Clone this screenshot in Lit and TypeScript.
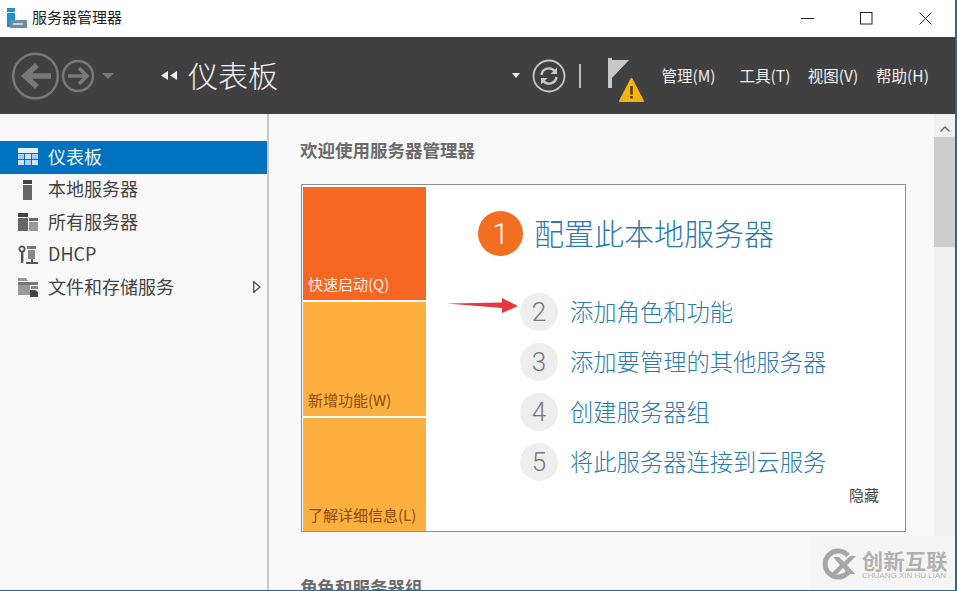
import { LitElement, css, html } from "lit";
import { customElement } from "lit/decorators.js";

const navItems = [
  { label: "仪表板", icon: "grid", active: true },
  { label: "本地服务器", icon: "one" },
  { label: "所有服务器", icon: "all" },
  { label: "DHCP", icon: "dhcp" },
  { label: "文件和存储服务", icon: "files", more: true },
];

const tiles = [
  { label: "快速启动(Q)", cls: "tile first" },
  { label: "新增功能(W)", cls: "tile" },
  { label: "了解详细信息(L)", cls: "tile" },
];

const steps = [
  { n: "2", label: "添加角色和功能" },
  { n: "3", label: "添加要管理的其他服务器" },
  { n: "4", label: "创建服务器组" },
  { n: "5", label: "将此服务器连接到云服务" },
];

const menus = [
  { label: "管理(M)", w: 85 },
  { label: "工具(T)", w: 68 },
  { label: "视图(V)", w: 68 },
  { label: "帮助(H)", w: 71 },
];

@customElement("app-root")
export class AppRoot extends LitElement {
  navIcon(name: string) {
    if (name === "grid") {
      return html`<svg width="20" height="18" viewBox="0 0 20 18">
        <rect x="0" y="0" width="20" height="5" fill="#e6f1fa"></rect>
        <rect x="0" y="6" width="6" height="5" fill="#a9d0ee"></rect>
        <rect x="7" y="6" width="6" height="5" fill="#cfe4f5"></rect>
        <rect x="14" y="6" width="6" height="5" fill="#a9d0ee"></rect>
        <rect x="0" y="12" width="6" height="5" fill="#cfe4f5"></rect>
        <rect x="7" y="12" width="6" height="5" fill="#a9d0ee"></rect>
        <rect x="14" y="12" width="6" height="5" fill="#cfe4f5"></rect>
      </svg>`;
    }
    if (name === "one") {
      return html`<svg width="20" height="20" viewBox="0 0 20 20">
        <rect x="5" y="0" width="9" height="4" fill="#444"></rect>
        <rect x="5" y="5" width="9" height="15" fill="#666"></rect>
      </svg>`;
    }
    if (name === "all") {
      return html`<svg width="20" height="20" viewBox="0 0 20 20">
        <rect x="0" y="1" width="10" height="4" fill="#444"></rect>
        <rect x="0" y="6" width="10" height="13" fill="#666"></rect>
        <rect x="11" y="6" width="9" height="3" fill="#666"></rect>
        <rect x="11" y="10" width="9" height="9" fill="#999"></rect>
      </svg>`;
    }
    if (name === "dhcp") {
      return html`<svg width="20" height="20" viewBox="0 0 20 20">
        <circle cx="4" cy="4" r="2.6" fill="none" stroke="#555" stroke-width="1.8"></circle>
        <rect x="3" y="6" width="2.4" height="12" rx="1" fill="#555"></rect>
        <rect x="9" y="1" width="9" height="3" fill="#777"></rect>
        <rect x="10" y="5" width="7" height="9" fill="#888"></rect>
        <rect x="13" y="14" width="2" height="3" fill="#555"></rect>
        <rect x="8" y="17" width="12" height="2" fill="#555"></rect>
      </svg>`;
    }
    return html`<svg width="20" height="20" viewBox="0 0 20 20">
      <path d="M0 1H8L10 4H0Z" fill="#999"></path>
      <rect x="0" y="5" width="20" height="3" fill="#777"></rect>
      <rect x="0" y="8" width="12" height="10" fill="#999"></rect>
      <rect x="13" y="9" width="7" height="3" fill="#888"></rect>
      <path d="M12 13H17L20 15V20H12Z" fill="#444"></path>
    </svg>`;
  }

  render() {
    return html`
      <div class="window">
        <header class="titlebar">
          <svg class="appicon" width="20" height="20" viewBox="0 0 20 20">
            <rect x="0" y="0" width="8" height="4" fill="#1c8fd6"></rect>
            <rect x="0" y="5" width="8" height="14" fill="#1c8fd6"></rect>
            <rect x="3" y="12" width="17" height="8" fill="#6d8ea3"></rect>
            <rect x="6" y="15" width="10" height="2" fill="#c4d4de"></rect>
          </svg>
          <span class="apptitle">服务器管理器</span>
          <div class="winbtns">
            <svg width="13" height="13" viewBox="0 0 13 13"><path d="M0 6.5H13" stroke="#222" fill="none"></path></svg>
            <svg width="13" height="13" viewBox="0 0 13 13"><rect x="0.5" y="0.5" width="11.5" height="11.5" stroke="#222" fill="none"></rect></svg>
            <svg width="13" height="13" viewBox="0 0 13 13"><path d="M0.5 0.5L12.5 12.5M12.5 0.5L0.5 12.5" stroke="#222" fill="none"></path></svg>
          </div>
        </header>

        <div class="toolbar">
          <svg class="navarrows" width="106" height="50" viewBox="0 0 106 50">
            <g fill="none" stroke="#787878">
              <circle cx="23.5" cy="25" r="22.3" stroke-width="2.5"></circle>
              <path d="M39 25H14M25 14L13 25L25 36" stroke-width="5.5"></path>
              <circle cx="66" cy="25" r="15" stroke-width="2.5"></circle>
              <path d="M56 25H74M67 17L75 25L67 33" stroke-width="3.5"></path>
            </g>
            <path d="M90 22H102L96 28Z" fill="#787878"></path>
          </svg>
          <svg class="crumbarrows" width="16" height="10" viewBox="0 0 16 10">
            <path d="M7 0V9L0 4.5ZM16 0V9L9 4.5Z" fill="#f2f2f2"></path>
          </svg>
          <span class="crumb">仪表板</span>
          <div class="spacer"></div>
          <svg class="dropdown" width="8" height="5" viewBox="0 0 8 5"><path d="M0 0H8L4 5Z" fill="#eee"></path></svg>
          <svg class="refresh" width="34" height="34" viewBox="0 0 34 34">
            <g fill="none" stroke="#c8c8c8">
              <circle cx="17" cy="17" r="15.5" stroke-width="1.8"></circle>
              <path d="M9.5 16A7.5 7.5 0 0 1 23 12.5M24.5 18A7.5 7.5 0 0 1 11 21.5" stroke-width="2.4"></path>
            </g>
            <path d="M25 8.5V15H18.5ZM9 25.5V19H15.5Z" fill="#c8c8c8"></path>
          </svg>
          <span class="sep"></span>
          <svg class="flag" width="38" height="46" viewBox="0 0 38 46">
            <rect x="0" y="1" width="4" height="30" fill="#c8c8c8"></rect>
            <path d="M4 3H21L4 21Z" fill="#c8c8c8"></path>
            <path d="M23.5 22L35 44H12Z" fill="#f7b313" stroke="#f7b313" stroke-width="2" stroke-linejoin="round"></path>
            <rect x="22.3" y="29" width="2.4" height="8.5" fill="#4a3500"></rect>
            <rect x="22.3" y="39" width="2.4" height="2.5" fill="#4a3500"></rect>
          </svg>
          <nav class="menus">
            ${menus.map(
              (m) => html`<span class="menu" style="width:${m.w}px">${m.label}</span>`
            )}
          </nav>
        </div>

        <div class="body">
          <aside class="sidebar">
            ${navItems.map(
              (item) => html`
                <div class="navitem ${item.active ? "active" : ""}">
                  <span class="navicon">${this.navIcon(item.icon)}</span>
                  <span class="navlabel">${item.label}</span>
                  ${item.more
                    ? html`<svg class="more" width="8" height="12" viewBox="0 0 8 12"><path d="M0.7 0.7L7 6L0.7 11.3Z" fill="none" stroke="#444" stroke-width="1.2"></path></svg>`
                    : ""}
                </div>
              `
            )}
          </aside>

          <main class="content">
            <h2 class="heading">欢迎使用服务器管理器</h2>
            <section class="card">
              <div class="tiles">
                ${tiles.map(
                  (t) => html`<div class=${t.cls}><span>${t.label}</span></div>`
                )}
              </div>
              <div class="panel">
                <div class="mainstep">
                  <span class="bigcircle">1</span>
                  <span class="maintext">配置此本地服务器</span>
                </div>
                <div class="steps">
                  ${steps.map(
                    (s) => html`<div class="step">
                      <span class="circle">${s.n}</span>
                      <span class="steptext">${s.label}</span>
                    </div>`
                  )}
                </div>
                <div class="hide">隐藏</div>
              </div>
              <svg class="redarrow" width="72" height="16" viewBox="0 0 72 16">
                <path d="M0 5.5L55 4.5L55 0L71 8L55 15L55 10Z" fill="#e8383d"></path>
              </svg>
            </section>
            <h2 class="heading second">角色和服务器组</h2>
          </main>

          <div class="scrollbar">
            <svg class="up" width="10" height="6" viewBox="0 0 10 6"><path d="M0.5 5.5L5 1L9.5 5.5" fill="none" stroke="#666" stroke-width="1.3"></path></svg>
            <div class="thumb"></div>
          </div>
        </div>

        <div class="watermark">
          <svg width="34" height="34" viewBox="0 0 34 34">
            <path d="M26 8.5A13 13 0 1 0 26 25.5" fill="none" stroke="#a6a6a6" stroke-width="5"></path>
            <path d="M11 10L17 10L22 15L28 9L34 9L25 18L33 27L26 27L21 21L15 27L9 27L18 18Z" fill="#a6a6a6"></path>
          </svg>
          <div class="wmtext">
            <span class="wmcn">创新互联</span>
            <span class="wmen">CHUANG XIN HU LIAN</span>
          </div>
        </div>
      </div>
    `;
  }

  static styles = css`
    :host {
      display: block;
      width: 957px;
      height: 591px;
      overflow: hidden;
      font-family: "Noto Sans CJK SC", "Liberation Sans", sans-serif;
    }
    * {
      box-sizing: border-box;
    }
    .window {
      position: relative;
      width: 957px;
      height: 591px;
      display: flex;
      flex-direction: column;
      background: #f8f8f8;
      border-right: 2px solid #1a6ea8;
      border-bottom: 1px solid #1a6ea8;
      overflow: hidden;
    }
    .titlebar {
      height: 37px;
      flex: none;
      display: flex;
      align-items: center;
      background: #fff;
      padding-left: 7px;
    }
    .appicon {
      margin: 0 5px 1px 0;
    }
    .apptitle {
      font-size: 15px;
      color: #222;
      margin-bottom: 4px;
    }
    .winbtns {
      margin-left: auto;
      display: flex;
      gap: 46px;
      padding-right: 23px;
    }
    .toolbar {
      height: 77px;
      flex: none;
      display: flex;
      align-items: center;
      background: #404040;
      padding-left: 12px;
      color: #f2f2f2;
    }
    .crumbarrows {
      margin-left: 43px;
    }
    .crumb {
      font-size: 30px;
      margin: 0 0 4px 11px;
      color: #f4f4f4;
      font-weight: 300;
    }
    .spacer {
      flex: 1;
    }
    .dropdown {
      margin-right: 12px;
    }
    .sep {
      width: 2px;
      height: 24px;
      background: #bdbdbd;
      margin: 0 27px 0 13px;
    }
    .flag {
      margin-top: 8px;
    }
    .menus {
      display: flex;
      padding-right: 17px;
    }
    .menu {
      font-size: 15.5px;
      color: #f2f2f2;
      text-align: center;
      white-space: nowrap;
      margin-bottom: 2px;
    }
    .body {
      flex: 1;
      display: flex;
      min-height: 0;
    }
    .sidebar {
      width: 269px;
      flex: none;
      padding-top: 27px;
      background: #f8f8f8;
      border-right: 2px solid #c8c8c8;
    }
    .navitem {
      height: 32.5px;
      display: flex;
      align-items: center;
      padding-left: 18px;
      font-size: 18px;
      color: #444;
    }
    .navitem.active {
      background: #0072c0;
      color: #f1f7fc;
    }
    .navicon {
      width: 20px;
      height: 20px;
      display: flex;
      align-items: center;
      margin-right: 10px;
    }
    .navlabel {
      margin-bottom: 3px;
    }
    .more {
      margin-left: auto;
      margin-right: 6px;
    }
    .content {
      flex: 1;
      padding: 23px 0 0 31px;
      min-width: 0;
      overflow: hidden;
    }
    .heading {
      margin: 0;
      font-size: 17.5px;
      line-height: 26px;
      font-weight: 700;
      color: #6a6a6a;
    }
    .heading.second {
      margin-top: 42px;
    }
    .card {
      position: relative;
      width: 605px;
      height: 348px;
      margin: 21px 0 0 1px;
      background: #fff;
      border: 1px solid #8c8c8c;
      padding: 2px 0 0 1px;
      display: flex;
    }
    .tiles {
      width: 123px;
      flex: none;
      display: flex;
      flex-direction: column;
      gap: 2px;
    }
    .tile {
      flex: 1;
      display: flex;
      align-items: flex-end;
      padding: 0 0 5px 5px;
      background: #fdb03f;
      font-size: 15px;
      line-height: 22px;
      color: #8a4b08;
    }
    .tile.first {
      background: #f56722;
      color: #fdeee2;
    }
    .panel {
      position: relative;
      flex: 1;
      padding: 24px 0 0 52px;
    }
    .mainstep {
      display: flex;
      align-items: center;
      height: 44px;
    }
    .bigcircle {
      width: 45px;
      height: 45px;
      border-radius: 50%;
      background: #f26f21;
      color: #fff;
      display: flex;
      align-items: center;
      justify-content: center;
      font-family: Roboto, "Liberation Sans", sans-serif;
      font-size: 30px;
      font-weight: 300;
      flex: none;
    }
    .maintext {
      margin: 0 0 2px 11px;
      font-size: 30px;
      color: #2a7bb2;
      font-weight: 300;
    }
    .steps {
      display: flex;
      flex-direction: column;
      gap: 12px;
      margin: 38px 0 0 42px;
    }
    .step {
      height: 38px;
      display: flex;
      align-items: center;
    }
    .circle {
      width: 38px;
      height: 38px;
      border-radius: 50%;
      background: #eeeeee;
      color: #777;
      display: flex;
      align-items: center;
      justify-content: center;
      font-family: Roboto, "Liberation Sans", sans-serif;
      font-size: 26px;
      font-weight: 300;
      flex: none;
    }
    .steptext {
      margin: 0 0 2px 12px;
      font-size: 23.3px;
      color: #2a7bb2;
      font-weight: 300;
      white-space: nowrap;
    }
    .hide {
      position: absolute;
      right: 26px;
      bottom: 26px;
      font-size: 15px;
      color: #444;
    }
    .redarrow {
      position: absolute;
      left: 145px;
      top: 113px;
    }
    .scrollbar {
      width: 21px;
      flex: none;
      background: #f0f0f0;
      display: flex;
      flex-direction: column;
      align-items: center;
      padding-top: 12px;
    }
    .thumb {
      width: 100%;
      height: 110px;
      margin-top: 5px;
      background: #cdcdcd;
    }
    .watermark {
      position: absolute;
      left: 809px;
      top: 536px;
      width: 148px;
      height: 55px;
      display: flex;
      align-items: center;
      gap: 6px;
      padding-left: 13px;
      background: #f5f5f5;
    }
    .wmtext {
      display: flex;
      flex-direction: column;
    }
    .wmcn {
      font-size: 21px;
      line-height: 24px;
      font-weight: 700;
      color: #b0b0b0;
      letter-spacing: 0.5px;
    }
    .wmen {
      font-family: "Liberation Sans", sans-serif;
      font-size: 8px;
      line-height: 8px;
      color: #b4b4b4;
      white-space: nowrap;
    }
  `;
}
